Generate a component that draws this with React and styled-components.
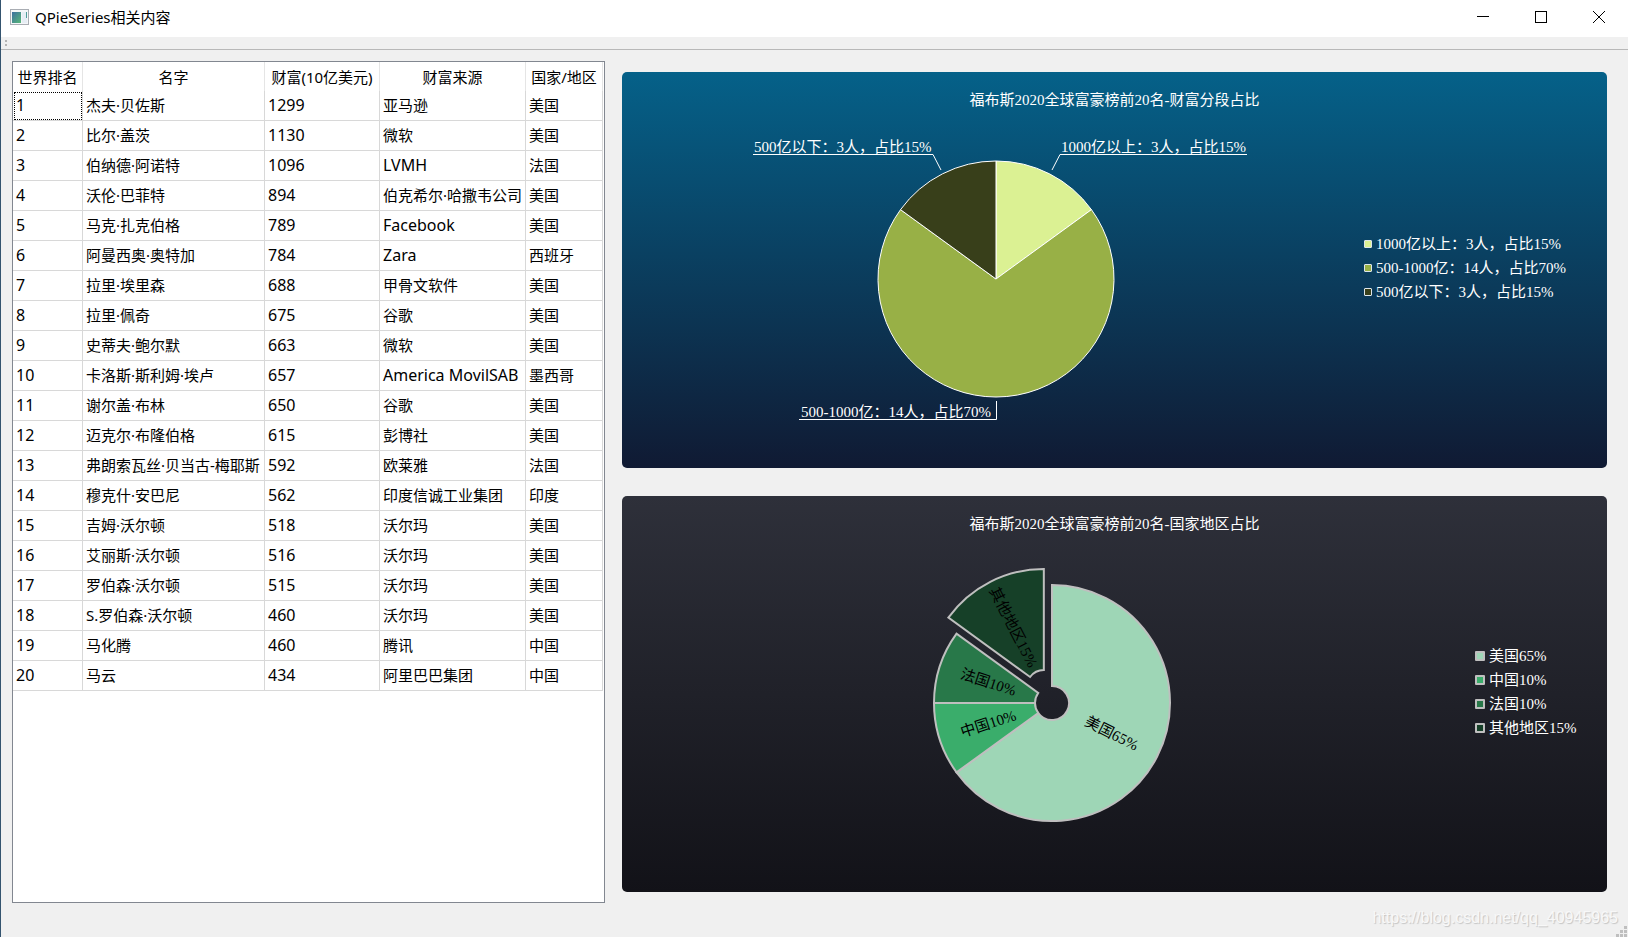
import React from 'react';
import styled, { createGlobalStyle } from 'styled-components';

const GlobalStyle = createGlobalStyle`
  *, *::before, *::after { box-sizing: border-box; }
  body {
    margin: 0;
    background: #f0f0f0;
    color: #000;
    font-family: "Noto Sans", "Noto Sans CJK SC", sans-serif;
    font-size: 15px;
    line-height: 20px;
  }
`;

const Window = styled.div`
  position: relative;
  display: flex;
  flex-direction: column;
  min-height: 100vh;
  border-left: 1px solid #34546f;
`;

const TitleBar = styled.header`
  display: flex;
  align-items: flex-start;
  height: 37px;
  background: #fff;
`;

const AppIcon = styled.svg`
  margin: 9px 6px 0 9px;
`;

const WindowTitle = styled.h1`
  flex: 1;
  margin: 0;
  font-size: 15px;
  font-weight: 400;
  line-height: 34px;
`;

const WindowButton = styled.button`
  display: flex;
  align-items: center;
  justify-content: center;
  width: 58px;
  height: 34px;
  padding: 0;
  border: 0;
  background: transparent;
`;

const ToolBar = styled.div`
  display: flex;
  align-items: center;
  height: 13px;
  padding-left: 4px;
  border-bottom: 1px solid #b8b8b8;
`;

const Main = styled.main`
  flex: 1;
  display: flex;
  gap: 17px;
  padding: 11px 21px 0 11px;
`;

const TablePanel = styled.section`
  flex: none;
  width: 593px;
  border: 1px solid #828790;
  background: #fff;
`;

const Table = styled.table`
  width: 590px;
  table-layout: fixed;
  border-collapse: separate;
  border-spacing: 0;
`;

const Col = styled.col`
  width: ${(p) => p.$width}px;
`;

const HeadCell = styled.th`
  height: 29px;
  padding: 0;
  border-right: 1px solid #e5e5e5;
  font-weight: 400;
  white-space: nowrap;
`;

const Cell = styled.td`
  height: 30px;
  padding: 0 0 2px 3px;
  border-right: 1px solid #d8d8d8;
  border-bottom: 1px solid #d8d8d8;
  font-size: ${(p) => (p.$latin ? 16 : 15)}px;
  white-space: nowrap;
  outline: ${(p) => (p.$current ? '1px dotted #000' : 'none')};
  outline-offset: -2px;
`;

const Charts = styled.div`
  flex: 1;
  min-width: 0;
  display: flex;
  flex-direction: column;
  gap: 28px;
  padding: 11px 0;
`;

const ChartPanel = styled.section`
  flex: 1;
  display: flex;
  flex-direction: column;
  padding: 18px 36px 20px 6px;
  border-radius: 5px;
  background: linear-gradient(${(p) => p.$from}, ${(p) => p.$to});
  color: #fff;
  font-family: "Liberation Serif", "Noto Sans CJK SC", serif;
`;

const ChartTitle = styled.h2`
  margin: 0 -30px 0 0;
  font-size: 15px;
  font-weight: 400;
  text-align: center;
`;

const ChartBody = styled.div`
  flex: 1;
  display: flex;
  align-items: center;
`;

const Plot = styled.div`
  flex: 1;
  display: flex;
  justify-content: center;
`;

const PieLabel = styled.text`
  fill: ${(p) => p.$color};
  font-size: 15px;
`;

const Legend = styled.ul`
  width: ${(p) => p.$width}px;
  margin: 0 0 22px;
  padding: 0;
  list-style: none;
`;

const LegendItem = styled.li`
  display: flex;
  align-items: center;
  gap: 4px;
  height: 24px;
  white-space: nowrap;
`;

const Marker = styled.span`
  flex: none;
  width: ${(p) => 6 + 2 * p.$border}px;
  height: ${(p) => 6 + 2 * p.$border}px;
  border: ${(p) => p.$border}px solid ${(p) => p.$edge};
  border-radius: 1px;
  background: ${(p) => p.$fill};
`;

const Footer = styled.footer`
  display: flex;
  justify-content: flex-end;
  height: 34px;
  padding: 5px 10px 0 0;
  color: #f8f8f8;
  font-family: "Liberation Sans", sans-serif;
  font-size: 16px;
  text-shadow: 1px 1px 1px #c4c4c4;
`;

const SizeGrip = styled.svg`
  position: absolute;
  right: 1px;
  bottom: 0;
`;

const COLUMNS = [
  { name: '世界排名', width: 70 },
  { name: '名字', width: 182 },
  { name: '财富(10亿美元)', width: 115 },
  { name: '财富来源', width: 146 },
  { name: '国家/地区', width: 77 },
];

const PEOPLE = [
  ['杰夫·贝佐斯', 1299, '亚马逊', '美国'],
  ['比尔·盖茨', 1130, '微软', '美国'],
  ['伯纳德·阿诺特', 1096, 'LVMH', '法国'],
  ['沃伦·巴菲特', 894, '伯克希尔·哈撒韦公司', '美国'],
  ['马克·扎克伯格', 789, 'Facebook', '美国'],
  ['阿曼西奥·奥特加', 784, 'Zara', '西班牙'],
  ['拉里·埃里森', 688, '甲骨文软件', '美国'],
  ['拉里·佩奇', 675, '谷歌', '美国'],
  ['史蒂夫·鲍尔默', 663, '微软', '美国'],
  ['卡洛斯·斯利姆·埃卢', 657, 'America MovilSAB', '墨西哥'],
  ['谢尔盖·布林', 650, '谷歌', '美国'],
  ['迈克尔·布隆伯格', 615, '彭博社', '美国'],
  ['弗朗索瓦丝·贝当古-梅耶斯', 592, '欧莱雅', '法国'],
  ['穆克什·安巴尼', 562, '印度信诚工业集团', '印度'],
  ['吉姆·沃尔顿', 518, '沃尔玛', '美国'],
  ['艾丽斯·沃尔顿', 516, '沃尔玛', '美国'],
  ['罗伯森·沃尔顿', 515, '沃尔玛', '美国'],
  ['S.罗伯森·沃尔顿', 460, '沃尔玛', '美国'],
  ['马化腾', 460, '腾讯', '中国'],
  ['马云', 434, '阿里巴巴集团', '中国'],
];

const WEALTH = [
  { label: '1000亿以上：3人，占比15%', share: 15, fill: '#dbf193' },
  { label: '500-1000亿：14人，占比70%', share: 70, fill: '#98b046' },
  { label: '500亿以下：3人，占比15%', share: 15, fill: '#383f1a' },
];

const REGIONS = [
  { label: '美国65%', share: 65, fill: '#9ed6b6' },
  { label: '中国10%', share: 10, fill: '#3aad6b' },
  { label: '法国10%', share: 10, fill: '#287849' },
  { label: '其他地区15%', share: 15, fill: '#164028', explode: 18 },
];

const RADIUS = 118;

// A point at the given clockwise angle from twelve o'clock.
function polar(angle, radius) {
  const a = (angle * Math.PI) / 180;
  return [Math.sin(a) * radius, -Math.cos(a) * radius];
}

function slicesOf(data) {
  let start = 0;
  return data.map((item) => {
    const end = start + item.share * 3.6;
    const slice = { ...item, start, end, mid: (start + end) / 2 };
    start = end;
    return slice;
  });
}

function slicePath({ start, end }, inner) {
  const large = end - start > 180 ? 1 : 0;
  const outer = `M${polar(start, RADIUS)} A${RADIUS} ${RADIUS} 0 ${large} 1 ${polar(end, RADIUS)}`;
  if (!inner) return `${outer} L0 0 Z`;
  return `${outer} L${polar(end, inner)} A${inner} ${inner} 0 ${large} 0 ${polar(start, inner)} Z`;
}

function WealthPie() {
  return (
    <svg width="520" height="320" viewBox="-260 -160 520 320" role="img" aria-label="财富分段占比">
      {slicesOf(WEALTH).map((s) => (
        <path key={s.label} d={slicePath(s, 0)} fill={s.fill} stroke="#fff" strokeWidth="1" />
      ))}
      <g fill="none" stroke="#fff" strokeWidth="1">
        <path d="M56 -109 L64 -124.5 H251" />
        <path d="M-55 -109 L-63 -124.5 H-243" />
        <path d="M0.5 122 V140.5 H-197" />
      </g>
      <PieLabel $color="#fff" x="65" y="-127">{WEALTH[0].label}</PieLabel>
      <PieLabel $color="#fff" x="-242" y="-127">{WEALTH[2].label}</PieLabel>
      <PieLabel $color="#fff" x="-195" y="138">{WEALTH[1].label}</PieLabel>
    </svg>
  );
}

function RegionPie() {
  return (
    <svg width="281" height="300" viewBox="-141 -150 281 300" role="img" aria-label="国家地区占比">
      {slicesOf(REGIONS).map((s) => {
        const explode = s.explode || 0;
        const [x, y] = polar(s.mid, 67 + explode);
        const turn = s.mid < 180 ? s.mid - 90 : s.mid - 270;
        return (
          <g key={s.label}>
            <path
              d={slicePath(s, 17)}
              transform={`translate(${polar(s.mid, explode)})`}
              fill={s.fill}
              stroke="#bfbfbf"
              strokeWidth="2"
            />
            <PieLabel
              $color="#000"
              y="5"
              textAnchor="middle"
              transform={`translate(${x} ${y}) rotate(${turn})`}
            >
              {s.label}
            </PieLabel>
          </g>
        );
      })}
    </svg>
  );
}

function Chart({ title, from, to, data, edge, border, legendWidth, children }) {
  return (
    <ChartPanel $from={from} $to={to}>
      <ChartTitle>{title}</ChartTitle>
      <ChartBody>
        <Plot>{children}</Plot>
        <Legend $width={legendWidth}>
          {data.map((d) => (
            <LegendItem key={d.label}>
              <Marker $fill={d.fill} $edge={edge} $border={border} />
              <span>{d.label}</span>
            </LegendItem>
          ))}
        </Legend>
      </ChartBody>
    </ChartPanel>
  );
}

export default function App() {
  return (
    <>
      <GlobalStyle />
      <Window>
        <TitleBar>
          <AppIcon width="19" height="16" viewBox="0 0 19 16" aria-hidden="true">
            <defs>
              <linearGradient id="pane" x1="0" y1="0" x2="1" y2="1">
                <stop offset="0" stopColor="#3c6fa0" />
                <stop offset="1" stopColor="#58b878" />
              </linearGradient>
            </defs>
            <rect x="0.5" y="0.5" width="18" height="15" fill="#f4f6f8" stroke="#a9adb3" />
            <rect x="2" y="3" width="9" height="11" fill="url(#pane)" />
            <rect x="12" y="3" width="5" height="11" fill="#e6edf4" />
            <rect x="16" y="3" width="1" height="6" fill="#4f9c9a" />
          </AppIcon>
          <WindowTitle>QPieSeries相关内容</WindowTitle>
          <WindowButton aria-label="最小化">
            <svg width="12" height="12" viewBox="0 0 12 12"><path d="M0 5.5H12" stroke="#000" /></svg>
          </WindowButton>
          <WindowButton aria-label="最大化">
            <svg width="12" height="12" viewBox="0 0 12 12">
              <rect x="0.5" y="0.5" width="11" height="11" fill="none" stroke="#000" />
            </svg>
          </WindowButton>
          <WindowButton aria-label="关闭">
            <svg width="12" height="12" viewBox="0 0 12 12"><path d="M0 0L12 12M12 0L0 12" stroke="#000" /></svg>
          </WindowButton>
        </TitleBar>
        <ToolBar>
          <svg width="3" height="7" viewBox="0 0 3 7" aria-hidden="true">
            <path d="M0 0h2v2h-2zM0 4h2v2h-2z" fill="#b4b4b4" />
          </svg>
        </ToolBar>
        <Main>
          <TablePanel>
            <Table>
              <colgroup>
                {COLUMNS.map((c) => <Col key={c.name} $width={c.width} />)}
              </colgroup>
              <thead>
                <tr>{COLUMNS.map((c) => <HeadCell key={c.name} scope="col">{c.name}</HeadCell>)}</tr>
              </thead>
              <tbody>
                {PEOPLE.map(([name, wealth, source, country], i) => (
                  <tr key={name}>
                    <Cell $latin $current={i === 0}>{i + 1}</Cell>
                    <Cell>{name}</Cell>
                    <Cell $latin>{wealth}</Cell>
                    <Cell $latin={/^[A-Za-z ]+$/.test(source)}>{source}</Cell>
                    <Cell>{country}</Cell>
                  </tr>
                ))}
              </tbody>
            </Table>
          </TablePanel>
          <Charts>
            <Chart
              title="福布斯2020全球富豪榜前20名-财富分段占比"
              from="#056189"
              to="#101a33"
              data={WEALTH}
              edge="#dfe6ea"
              border={1}
              legendWidth={207}
            >
              <WealthPie />
            </Chart>
            <Chart
              title="福布斯2020全球富豪榜前20名-国家地区占比"
              from="#2e303a"
              to="#121218"
              data={REGIONS}
              edge="#bfbfbf"
              border={2}
              legendWidth={96}
            >
              <RegionPie />
            </Chart>
          </Charts>
        </Main>
        <Footer>https://blog.csdn.net/qq_40945965</Footer>
        <SizeGrip width="11" height="11" viewBox="0 0 11 11" aria-hidden="true">
          <path
            d="M8 0h3v3h-3zM4 4h3v3h-3zM8 4h3v3h-3zM0 8h3v3h-3zM4 8h3v3h-3zM8 8h3v3h-3z"
            fill="#bfbfbf"
          />
        </SizeGrip>
      </Window>
    </>
  );
}
